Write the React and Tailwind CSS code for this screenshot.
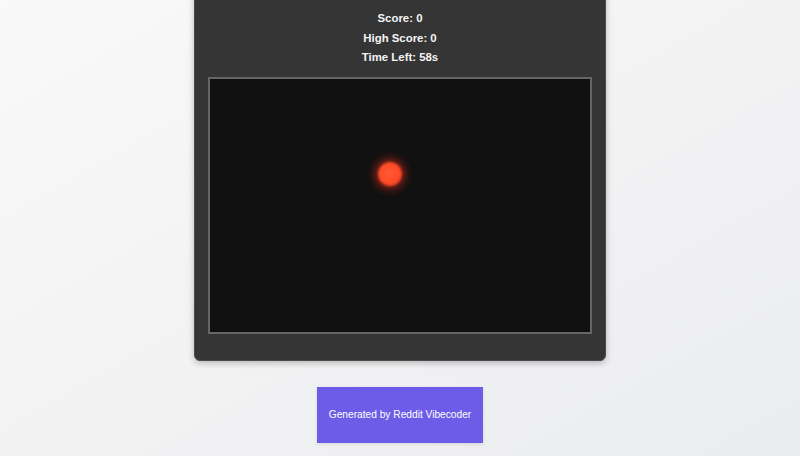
export default function App() {
  return (
    <div className="min-h-[456px] w-full bg-gradient-to-br from-[#f9f9f9] to-[#ebecee] flex flex-col items-center overflow-hidden" style={{ fontFamily: '"Liberation Sans", Arial, sans-serif' }}>
      <div className="w-[412px] mt-[-20px] pt-[28px] pb-[26px] bg-[#353535] border border-[#4a4a4a] rounded-[6px] shadow-[0_2px_6px_rgba(0,0,0,0.25)] flex flex-col items-center">
        <div className="flex flex-col items-center text-[#f4f4f4] font-bold text-[11.4px] leading-[19.5px]">
          <div>Score: 0</div>
          <div>High Score: 0</div>
          <div>Time Left: 58s</div>
        </div>
        <div className="mt-[9.5px] w-[384px] h-[257px] box-border border-2 border-[#666666] bg-[#111111] relative">
          <div className="absolute left-[168px] top-[83px] w-[24px] h-[24px] rounded-full bg-[radial-gradient(circle_at_45%_45%,#ff5a30_0%,#ff4a28_55%,#ee3a20_100%)] shadow-[0_0_8px_3px_rgba(255,50,25,0.55)] blur-[1px]" />
        </div>
      </div>
      <div className="mt-[26px] w-[166px] h-[56px] bg-[#6c5ce7] flex items-center justify-center text-white text-[10.2px] shadow-[0_1px_3px_rgba(0,0,0,0.12)]">
        Generated by Reddit Vibecoder
      </div>
    </div>
  );
}
